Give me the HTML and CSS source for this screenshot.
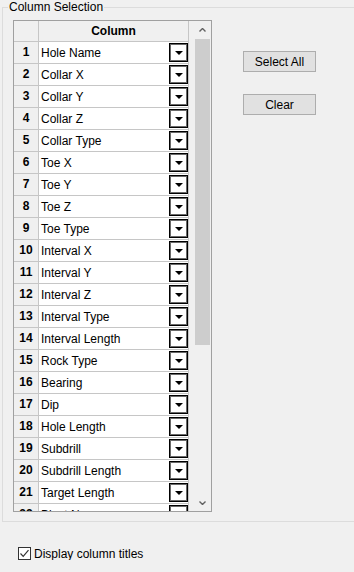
FILE: index.html
```html
<!DOCTYPE html>
<html lang="en">
<head>
    <meta charset="UTF-8">
    <title>Column Selection</title>
    <link rel="stylesheet" href="styles.css">
</head>
<body>

    <!-- Column Selection group -->
    <div class="group">
        <span class="group-title">Column Selection</span>
        <div class="group-body">

            <!-- Grid -->
            <div class="grid">
                <div class="grid-view">
                    <div class="row head">
                        <div class="num"></div>
                        <div class="cell">Column</div>
                    </div>
                    <div class="row"><div class="num">1</div><div class="cell"><span class="label">Hole Name</span><span class="drop"></span></div></div>
                    <div class="row"><div class="num">2</div><div class="cell"><span class="label">Collar X</span><span class="drop"></span></div></div>
                    <div class="row"><div class="num">3</div><div class="cell"><span class="label">Collar Y</span><span class="drop"></span></div></div>
                    <div class="row"><div class="num">4</div><div class="cell"><span class="label">Collar Z</span><span class="drop"></span></div></div>
                    <div class="row"><div class="num">5</div><div class="cell"><span class="label">Collar Type</span><span class="drop"></span></div></div>
                    <div class="row"><div class="num">6</div><div class="cell"><span class="label">Toe X</span><span class="drop"></span></div></div>
                    <div class="row"><div class="num">7</div><div class="cell"><span class="label">Toe Y</span><span class="drop"></span></div></div>
                    <div class="row"><div class="num">8</div><div class="cell"><span class="label">Toe Z</span><span class="drop"></span></div></div>
                    <div class="row"><div class="num">9</div><div class="cell"><span class="label">Toe Type</span><span class="drop"></span></div></div>
                    <div class="row"><div class="num">10</div><div class="cell"><span class="label">Interval X</span><span class="drop"></span></div></div>
                    <div class="row"><div class="num">11</div><div class="cell"><span class="label">Interval Y</span><span class="drop"></span></div></div>
                    <div class="row"><div class="num">12</div><div class="cell"><span class="label">Interval Z</span><span class="drop"></span></div></div>
                    <div class="row"><div class="num">13</div><div class="cell"><span class="label">Interval Type</span><span class="drop"></span></div></div>
                    <div class="row"><div class="num">14</div><div class="cell"><span class="label">Interval Length</span><span class="drop"></span></div></div>
                    <div class="row"><div class="num">15</div><div class="cell"><span class="label">Rock Type</span><span class="drop"></span></div></div>
                    <div class="row"><div class="num">16</div><div class="cell"><span class="label">Bearing</span><span class="drop"></span></div></div>
                    <div class="row"><div class="num">17</div><div class="cell"><span class="label">Dip</span><span class="drop"></span></div></div>
                    <div class="row"><div class="num">18</div><div class="cell"><span class="label">Hole Length</span><span class="drop"></span></div></div>
                    <div class="row"><div class="num">19</div><div class="cell"><span class="label">Subdrill</span><span class="drop"></span></div></div>
                    <div class="row"><div class="num">20</div><div class="cell"><span class="label">Subdrill Length</span><span class="drop"></span></div></div>
                    <div class="row"><div class="num">21</div><div class="cell"><span class="label">Target Length</span><span class="drop"></span></div></div>
                    <div class="row"><div class="num">22</div><div class="cell"><span class="label">Blast Name</span><span class="drop"></span></div></div>
                </div>

                <!-- Vertical scrollbar -->
                <div class="vscroll">
                    <div class="arrow">
                        <svg width="7" height="4" viewBox="0 0 7 4"><path d="M0.5 3.5 L3.5 0.5 L6.5 3.5" fill="none" stroke="#606060" stroke-width="1.4"/></svg>
                    </div>
                    <div class="track"><div class="thumb"></div></div>
                    <div class="arrow">
                        <svg width="7" height="4" viewBox="0 0 7 4"><path d="M0.5 0.5 L3.5 3.5 L6.5 0.5" fill="none" stroke="#606060" stroke-width="1.4"/></svg>
                    </div>
                </div>
            </div>

            <!-- Buttons -->
            <div class="actions">
                <button class="btn">Select All</button>
                <button class="btn">Clear</button>
            </div>
        </div>
    </div>

    <!-- Option -->
    <label class="check">
        <span class="box">
            <svg width="11" height="11" viewBox="0 0 11 11"><path d="M1.5 5.5 L4.2 8.3 L9.5 2.2" fill="none" stroke="#333" stroke-width="1.2"/></svg>
        </span>
        Display column titles
    </label>

</body>
</html>
```

FILE: styles.css
```css
body {
    margin: 0;
    background: #f0f0f0;
    font-family: "Liberation Sans", Arial, sans-serif;
    font-size: 12px;
    color: #000;
    overflow: hidden;
}

/* Group box (its right edge lies outside the window) */
.group {
    position: relative;
    margin: 7px 0 0 2px;
    border: 1px solid #dcdcdc;
    border-right: none;
}

.group-title {
    position: absolute;
    top: -8px;
    left: 5px;
    padding: 0 1px;
    line-height: 15px;
    background: #f0f0f0;
}

.group-body {
    display: flex;
    padding: 12px 0 9px 10px;
}

/* Grid */
.grid {
    display: flex;
    justify-content: space-between;
    width: 197px;
    height: 490px;
    border: 1px solid #a0a0a0;
    background: #f0f0f0;
}

.grid-view {
    width: 175px;
    overflow: hidden;
}

.row {
    display: flex;
    height: 21px;
    border-bottom: 1px solid #c6c6c6;
}

.row.head {
    height: 20px;
}

.num {
    width: 24px;
    border-right: 1px solid #c6c6c6;
    background: #f0f0f0;
    font-weight: bold;
    text-align: center;
    line-height: 21px;
}

.cell {
    display: flex;
    align-items: center;
    justify-content: space-between;
    width: 149px;
    border-right: 1px solid #c6c6c6;
    background: #fff;
}

.head .cell {
    justify-content: center;
    background: #f0f0f0;
    font-weight: bold;
}

.label {
    padding-left: 2px;
}

.drop {
    display: flex;
    align-items: center;
    justify-content: center;
    width: 17px;
    height: 17px;
    border: 1px solid #000;
    box-shadow: inset 0 0 0 1px #6a6a6a;
    background: #fff;
}

.drop::after {
    content: "";
    margin-top: 1px;
    border-left: 4px solid transparent;
    border-right: 4px solid transparent;
    border-top: 4px solid #000;
}

/* Scrollbar */
.vscroll {
    display: flex;
    flex-direction: column;
    width: 17px;
    background: #f0f0f0;
}

.arrow {
    display: flex;
    align-items: center;
    justify-content: center;
    height: 17px;
}

.track {
    flex: 1;
    padding: 1px 1px 0;
}

.thumb {
    height: 306px;
    background: #cdcdcd;
}

/* Buttons */
.actions {
    display: flex;
    flex-direction: column;
    gap: 22px;
    margin: 31px 0 0 31px;
}

.btn {
    width: 73px;
    height: 21px;
    padding: 0;
    border: 1px solid #adadad;
    background: #e1e1e1;
    font-family: inherit;
    font-size: 12px;
    color: #000;
}

/* Checkbox */
.check {
    display: flex;
    align-items: center;
    gap: 3px;
    margin: 25px 0 0 18px;
    height: 13px;
}

.box {
    display: flex;
    align-items: center;
    justify-content: center;
    width: 11px;
    height: 11px;
    border: 1px solid #333;
    background: #fff;
}
```
